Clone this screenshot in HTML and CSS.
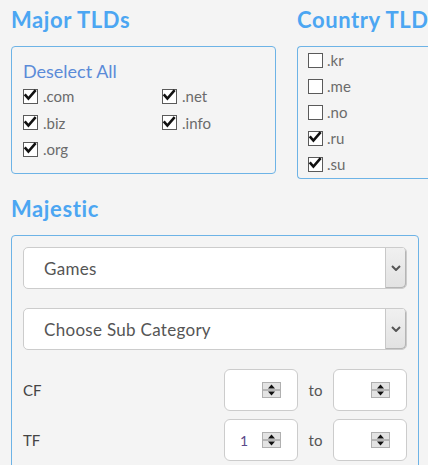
FILE: index.html
```html
<!DOCTYPE html>
<html>
<head>
<meta charset="utf-8">
<link rel="stylesheet" href="styles.css">
</head>
<body>
<div class="page">
  <div class="top">
    <section class="col col-major">
      <h2 class="heading">Major TLDs</h2>
      <div class="panel panel-major">
        <div class="deselect">Deselect All</div>
        <div class="grid">
          <label class="cb"><span class="box on"><svg viewBox="0 0 15 15"><path d="M2.6 7.4 L5.4 10.6 L11.8 3.2" /></svg></span><span class="lbl">.com</span></label>
          <label class="cb"><span class="box on"><svg viewBox="0 0 15 15"><path d="M2.6 7.4 L5.4 10.6 L11.8 3.2" /></svg></span><span class="lbl">.net</span></label>
          <label class="cb"><span class="box on"><svg viewBox="0 0 15 15"><path d="M2.6 7.4 L5.4 10.6 L11.8 3.2" /></svg></span><span class="lbl">.biz</span></label>
          <label class="cb"><span class="box on"><svg viewBox="0 0 15 15"><path d="M2.6 7.4 L5.4 10.6 L11.8 3.2" /></svg></span><span class="lbl">.info</span></label>
          <label class="cb"><span class="box on"><svg viewBox="0 0 15 15"><path d="M2.6 7.4 L5.4 10.6 L11.8 3.2" /></svg></span><span class="lbl">.org</span></label>
        </div>
      </div>
    </section>
    <section class="col col-country">
      <h2 class="heading">Country TLDs</h2>
      <div class="panel panel-country">
        <label class="cb"><span class="box"></span><span class="lbl">.kr</span></label>
        <label class="cb"><span class="box"></span><span class="lbl">.me</span></label>
        <label class="cb"><span class="box"></span><span class="lbl">.no</span></label>
        <label class="cb"><span class="box on"><svg viewBox="0 0 15 15"><path d="M2.6 7.4 L5.4 10.6 L11.8 3.2" /></svg></span><span class="lbl">.ru</span></label>
        <label class="cb"><span class="box on"><svg viewBox="0 0 15 15"><path d="M2.6 7.4 L5.4 10.6 L11.8 3.2" /></svg></span><span class="lbl">.su</span></label>
      </div>
    </section>
  </div>

  <h2 class="heading heading-majestic">Majestic</h2>
  <div class="panel panel-majestic">
    <div class="select">
      <span class="select-text">Games</span>
      <span class="select-btn"><svg viewBox="0 0 10 6" width="10" height="6"><path d="M1 1 L5 5 L9 1" /></svg></span>
    </div>
    <div class="select">
      <span class="select-text">Choose Sub Category</span>
      <span class="select-btn"><svg viewBox="0 0 10 6" width="10" height="6"><path d="M1 1 L5 5 L9 1" /></svg></span>
    </div>
    <div class="range">
      <span class="range-label">CF</span>
      <div class="range-inputs">
        <div class="num"><span class="num-val"></span><span class="spin"><svg viewBox="0 0 19 16" width="19" height="16"><rect x="0.5" y="0.5" width="18" height="15" class="spin-bg"/><line x1="1" y1="8" x2="18" y2="8" class="spin-line"/><path d="M9.5 2.5 L13 6.5 L6 6.5 Z" class="spin-tri"/><path d="M9.5 13.5 L13 9.5 L6 9.5 Z" class="spin-tri"/></svg></span></div>
        <span class="to">to</span>
        <div class="num"><span class="num-val"></span><span class="spin"><svg viewBox="0 0 19 16" width="19" height="16"><rect x="0.5" y="0.5" width="18" height="15" class="spin-bg"/><line x1="1" y1="8" x2="18" y2="8" class="spin-line"/><path d="M9.5 2.5 L13 6.5 L6 6.5 Z" class="spin-tri"/><path d="M9.5 13.5 L13 9.5 L6 9.5 Z" class="spin-tri"/></svg></span></div>
      </div>
    </div>
    <div class="range">
      <span class="range-label">TF</span>
      <div class="range-inputs">
        <div class="num"><span class="num-val">1</span><span class="spin"><svg viewBox="0 0 19 16" width="19" height="16"><rect x="0.5" y="0.5" width="18" height="15" class="spin-bg"/><line x1="1" y1="8" x2="18" y2="8" class="spin-line"/><path d="M9.5 2.5 L13 6.5 L6 6.5 Z" class="spin-tri"/><path d="M9.5 13.5 L13 9.5 L6 9.5 Z" class="spin-tri"/></svg></span></div>
        <span class="to">to</span>
        <div class="num"><span class="num-val"></span><span class="spin"><svg viewBox="0 0 19 16" width="19" height="16"><rect x="0.5" y="0.5" width="18" height="15" class="spin-bg"/><line x1="1" y1="8" x2="18" y2="8" class="spin-line"/><path d="M9.5 2.5 L13 6.5 L6 6.5 Z" class="spin-tri"/><path d="M9.5 13.5 L13 9.5 L6 9.5 Z" class="spin-tri"/></svg></span></div>
      </div>
    </div>
  </div>
</div>
</body>
</html>
```
FILE: styles.css
```css
html, body {
  margin: 0;
  padding: 0;
  overflow: hidden;
  background: #f4f4f4;
}
body {
  font-family: "Lato", "Open Sans", sans-serif;
  color: #666;
  width: 428px;
  height: 465px;
}
.page {
  padding: 7px 0 0 11px;
}
.top {
  display: flex;
  gap: 21px;
  align-items: flex-start;
}
.heading {
  margin: 0 0 13px 0;
  font-size: 22px;
  line-height: 26px;
  font-weight: 700;
  letter-spacing: 0.6px;
  color: #4ca6f2;
  white-space: nowrap;
}
.col-major {
  width: 265px;
  flex: none;
}
.col-country {
  width: 200px;
  flex: none;
}
.panel {
  border: 1px solid #6db3e6;
  border-radius: 4px;
  box-sizing: border-box;
}
.panel-major {
  padding: 12px 11px 10px 11px;
}
.deselect {
  font-size: 18px;
  line-height: 24px;
  color: #5b8bd8;
}
.grid {
  display: grid;
  grid-template-columns: 139px 1fr;
  grid-auto-rows: 26.5px;
}
.cb {
  display: flex;
  align-items: center;
  gap: 5px;
  height: 26px;
  font-size: 15px;
  color: #6b6b6b;
}
.grid .cb {
  height: 26.5px;
}
.box {
  width: 15px;
  height: 15px;
  box-sizing: border-box;
  border: 1.5px solid #5a5a5a;
  background: #fff;
  flex: none;
  position: relative;
}
.box svg {
  position: absolute;
  left: -1.5px;
  top: -1.5px;
  width: 15px;
  height: 15px;
}
.box svg path {
  fill: none;
  stroke: #111;
  stroke-width: 2.6;
  stroke-linecap: square;
}
.lbl {
  line-height: 18px;
}
.panel-country {
  padding: 0 0 1px 10px;
  border-right: none;
}
.panel-country .cb {
  gap: 4px;
}
.heading-majestic {
  margin-top: 17px;
}
.panel-majestic {
  width: 408px;
  padding: 11px 11px 20px 11px;
  height: 260px;
}
.select {
  display: flex;
  align-items: stretch;
  height: 42px;
  box-sizing: border-box;
  border: 1px solid #cccccc;
  border-radius: 5px;
  background: #fff;
  margin-bottom: 19px;
  overflow: hidden;
}
.select-text {
  flex: 1;
  display: flex;
  align-items: center;
  padding-left: 20px;
  font-size: 17px;
  letter-spacing: 0.3px;
  color: #555;
}
.select-btn {
  width: 20px;
  flex: none;
  display: flex;
  align-items: center;
  justify-content: center;
  background: linear-gradient(#f0f0f0, #e2e2e2);
  border-left: 1px solid #c8c8c8;
  box-shadow: inset -1px -1px 0 #b5b5b5;
  border-radius: 0 4px 4px 0;
}
.select-btn path {
  fill: none;
  stroke: #555;
  stroke-width: 2;
}
.range {
  display: flex;
  align-items: center;
  justify-content: space-between;
  margin-bottom: 8px;
}
.range-label {
  font-size: 15px;
  font-weight: 400;
  color: #444;
}
.range-inputs {
  display: flex;
  align-items: center;
}
.num {
  width: 74px;
  height: 42px;
  box-sizing: border-box;
  border: 1px solid #cccccc;
  border-radius: 6px;
  background: #fff;
  display: flex;
  align-items: center;
  padding: 0 16px 0 15px;
}
.num-val {
  flex: 1;
  font-size: 14px;
  color: #5b4a8a;
}
.spin {
  display: flex;
}
.spin-bg {
  fill: #e3e3e3;
  stroke: #b0b0b0;
  stroke-width: 1;
}
.spin-line {
  stroke: #888;
  stroke-width: 1;
}
.spin-tri {
  fill: #111;
}
.to {
  width: 35px;
  text-align: center;
  font-size: 15px;
  color: #555;
}
```
